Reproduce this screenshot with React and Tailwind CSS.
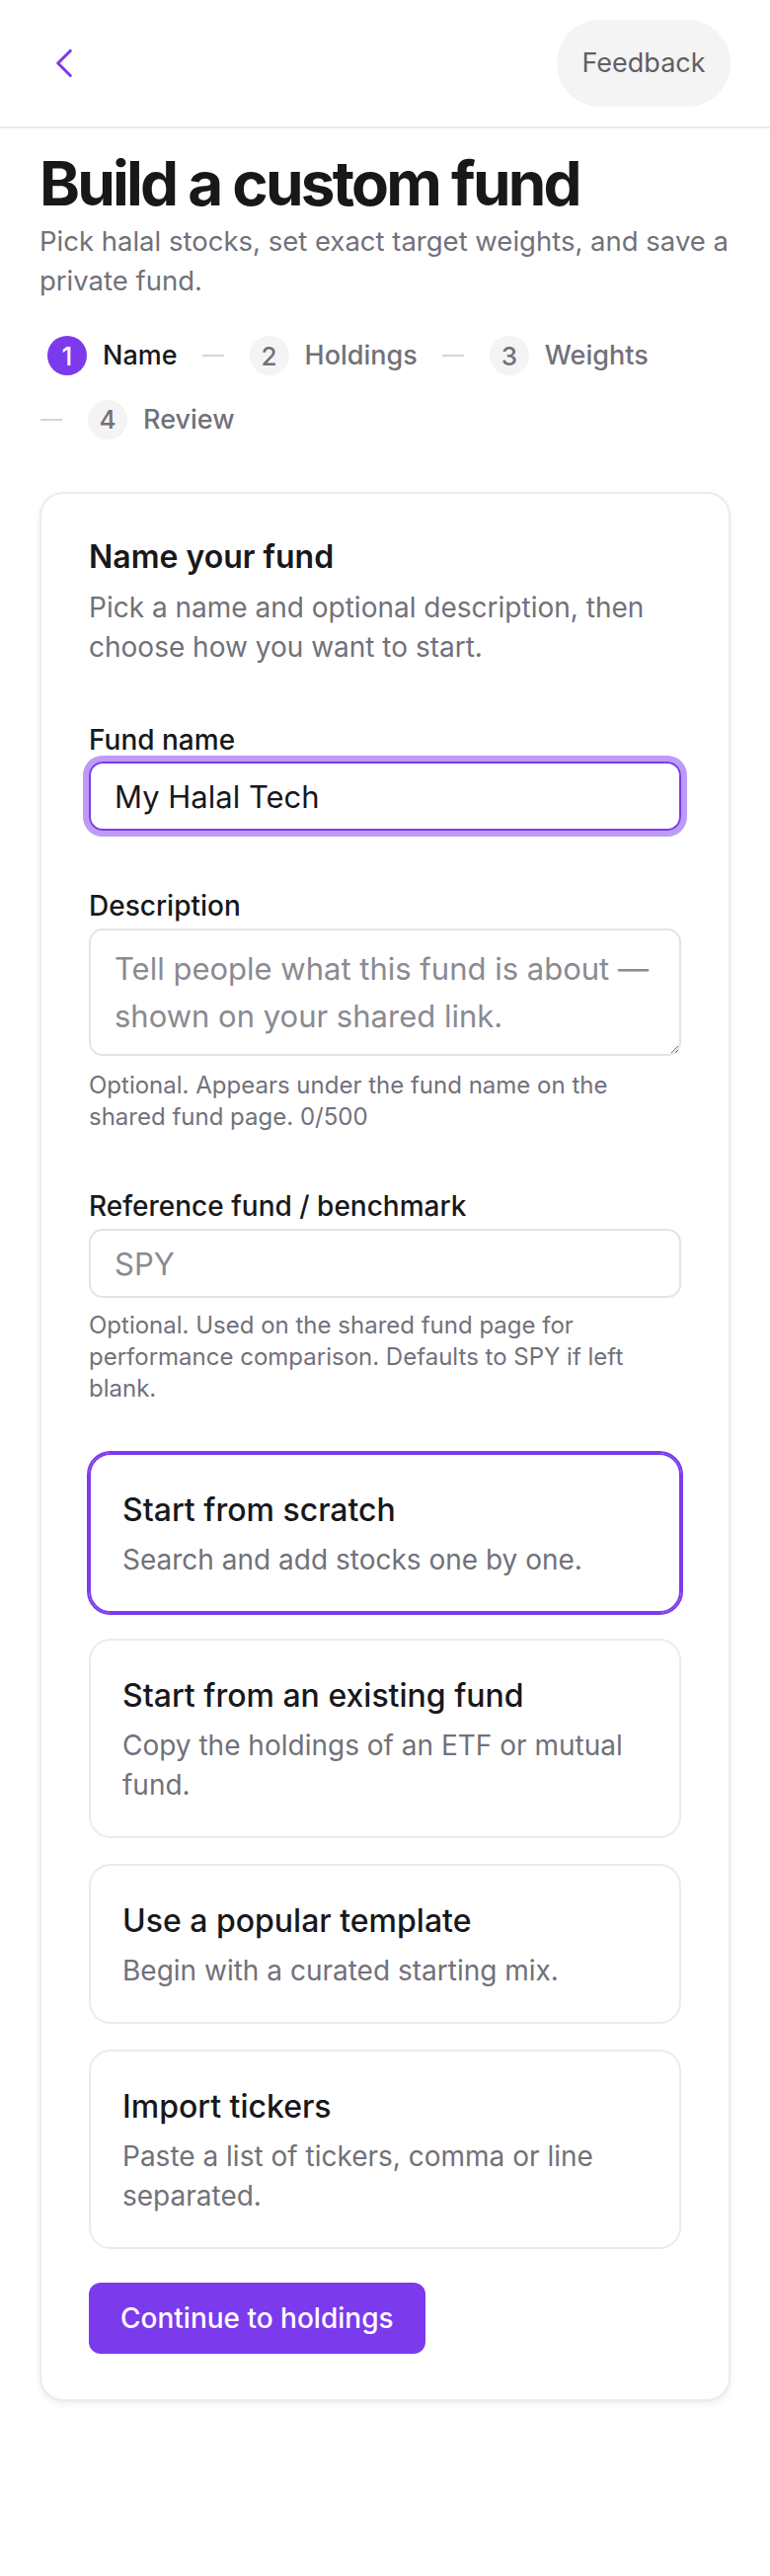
import React from 'react';
import { ChevronLeft } from 'lucide-react';

const steps = [
  { n: 1, label: 'Name', active: true },
  { n: 2, label: 'Holdings' },
  { n: 3, label: 'Weights' },
  { n: 4, label: 'Review' },
];

const starts = [
  { id: 'scratch', title: 'Start from scratch', desc: 'Search and add stocks one by one.' },
  { id: 'existing', title: 'Start from an existing fund', desc: 'Copy the holdings of an ETF or mutual fund.' },
  { id: 'template', title: 'Use a popular template', desc: 'Begin with a curated starting mix.' },
  { id: 'import', title: 'Import tickers', desc: 'Paste a list of tickers, comma or line separated.' },
];

export default function App() {
  const selected = 'scratch';

  return (
    <div className="min-h-screen bg-white font-[Inter,sans-serif] text-[#18181b] antialiased">
      {/* Top bar */}
      <header className="flex items-center justify-between border-b-2 border-[#ececee] px-10 py-5">
        <button className="text-[#7c3aed]" aria-label="Back">
          <ChevronLeft size={50} strokeWidth={1.5} />
        </button>
        <button className="flex h-[88px] w-[176px] items-center justify-center rounded-full bg-[#f4f4f5] text-[27px] text-[#5f5f66]">
          Feedback
        </button>
      </header>

      <main className="px-10 pt-[23px] pb-[176px]">
        <h1 className="text-[62px] font-bold leading-[66px] tracking-[-0.045em]">Build a custom fund</h1>
        <p className="mt-[5px] text-[27.5px] leading-[40px] text-[#71717a]">
          Pick halal stocks, set exact target weights, and save a private fund.
        </p>

        {/* Stepper */}
        <ol className="mt-9 flex flex-wrap items-center gap-x-6 gap-y-6">
          {steps.map((s, i) => (
            <li key={s.n} className="flex items-center">
              {i > 0 && <span className="ml-px mr-[26px] block h-[2px] w-[22px] bg-[#d4d4d8]" />}
              <span
                className={
                  s.active
                    ? 'ml-2 mr-4 flex h-10 w-10 items-center justify-center rounded-full bg-[#7c3aed] text-[26px] font-medium text-white'
                    : 'mr-4 flex h-10 w-10 items-center justify-center rounded-full bg-[#f4f4f5] text-[26px] font-medium text-[#71717a]'
                }
              >
                {s.n}
              </span>
              <span className={s.active ? 'text-[27px] font-medium text-[#18181b]' : 'text-[27px] font-medium text-[#71717a]'}>
                {s.label}
              </span>
            </li>
          ))}
        </ol>

        {/* Card */}
        <section className="mt-[53px] rounded-[24px] border-2 border-[#ececee] bg-white px-12 pt-12 pb-[46px] shadow-[0_3px_6px_rgba(0,0,0,0.07)]">
          <h2 className="text-[32px] font-semibold leading-[32px]">Name your fund</h2>
          <p className="mt-[15px] text-[28px] leading-[40px] text-[#71717a]">
            Pick a name and optional description, then choose how you want to start.
          </p>

          <label className="mt-[54px] block text-[28px] font-medium leading-[40px]">Fund name</label>
          <input
            defaultValue="My Halal Tech"
            className="mt-[2px] block h-[70px] w-full rounded-[14px] border-2 border-[#7c3aed] px-6 text-[31px] text-[#18181b] outline-none ring-[6px] ring-[#7c3aed]/50"
          />

          <label className="mt-[56px] block text-[28px] font-medium leading-[40px]">Description</label>
          <textarea
            placeholder="Tell people what this fund is about — shown on your shared link."
            className="mt-[3px] block h-[129px] w-full rounded-[14px] border-2 border-[#e4e4e7] px-6 pt-[15px] text-[31px] leading-[48px] outline-none placeholder:text-[#8a8a92]"
          />
          <p className="mt-[14px] text-[24px] leading-[32px] text-[#71717a]">
            Optional. Appears under the fund name on the shared fund page. 0/500
          </p>

          <label className="mt-[54px] block text-[28px] font-medium leading-[40px]">Reference fund / benchmark</label>
          <input
            placeholder="SPY"
            className="mt-[3px] block h-[70px] w-full rounded-[14px] border-2 border-[#e4e4e7] px-6 text-[31px] outline-none placeholder:text-[#8a8a92]"
          />
          <p className="mt-[12px] text-[24px] leading-[32px] text-[#71717a]">
            Optional. Used on the shared fund page for performance comparison. Defaults to SPY if left blank.
          </p>

          {/* Start options */}
          <div className="mt-[49px] flex flex-col gap-[26px]">
            {starts.map((o) => (
              <button
                key={o.id}
                className={
                  o.id === selected
                    ? 'rounded-[22px] border-2 border-[#7c3aed] p-8 text-left ring-2 ring-[#7c3aed]'
                    : 'rounded-[22px] border-2 border-[#ebebee] p-8 text-left'
                }
              >
                <div className="text-[32px] font-medium leading-[48px] text-[#18181b]">{o.title}</div>
                <div className="mt-[6px] text-[28px] leading-[40px] text-[#71717a]">{o.desc}</div>
              </button>
            ))}
          </div>

          <button className="mt-[34px] h-[72px] rounded-[12px] bg-[#7c3aed] px-8 text-[28px] font-medium text-white">
            Continue to holdings
          </button>
        </section>
      </main>
    </div>
  );
}
